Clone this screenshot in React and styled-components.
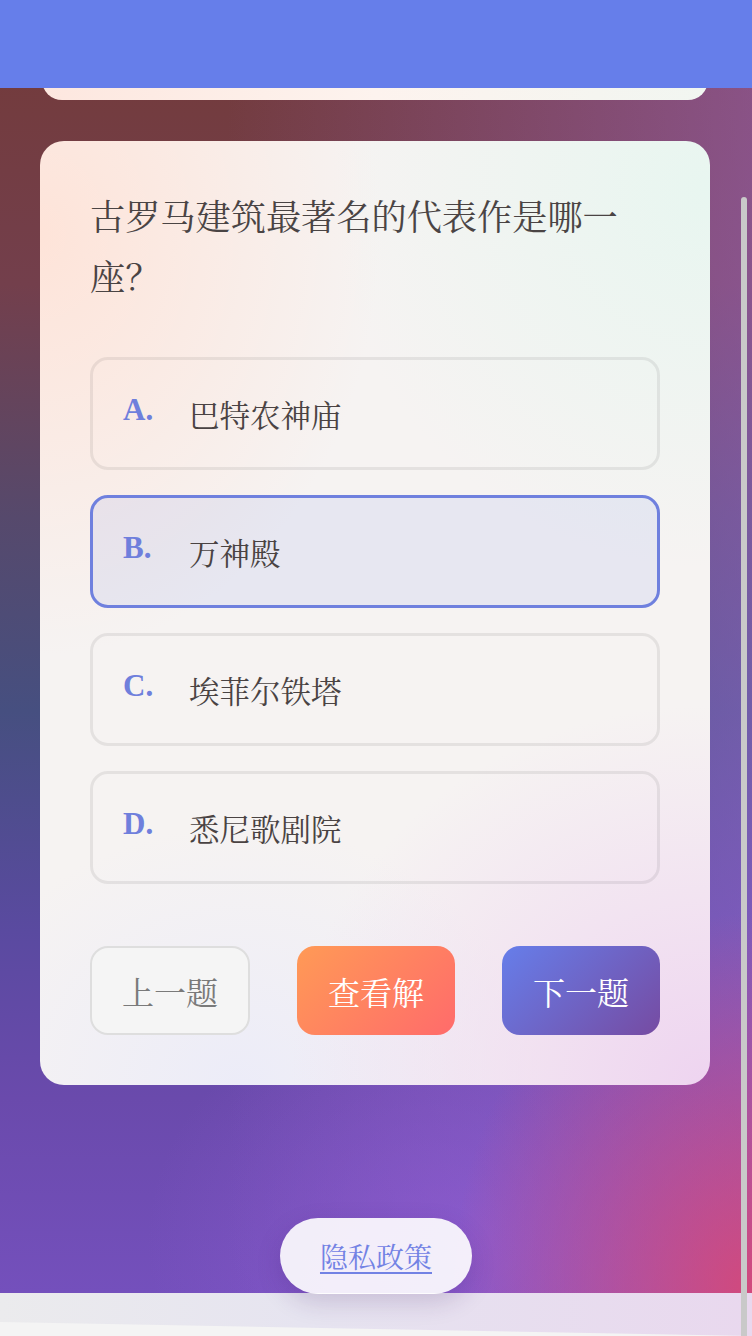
import React from 'react';
import styled, { createGlobalStyle } from 'styled-components';

const GlobalStyle = createGlobalStyle`
  html, body {
    margin: 0;
    padding: 0;
  }
  body {
    font-family: "Liberation Serif", "Noto Serif CJK SC", "Noto Sans CJK SC", serif;
    background: #f4f4f4;
  }
  * {
    box-sizing: border-box;
  }
`;

const Page = styled.div`
  width: 752px;
  min-height: 1336px;
  display: flex;
  flex-direction: column;
  overflow: hidden;
`;

const Stage = styled.div`
  display: flex;
  flex-direction: column;
  align-items: stretch;
  background:
    radial-gradient(ellipse 300px 380px at 100% 100%, rgba(214, 72, 120, 0.95) 0%, rgba(214, 72, 120, 0) 100%),
    radial-gradient(ellipse 320px 260px at 62% 96%, rgba(150, 95, 215, 0.55) 0%, rgba(150, 95, 215, 0) 100%),
    linear-gradient(90deg, rgba(165, 110, 220, 0) 30%, rgba(165, 110, 220, 0.45) 100%),
    linear-gradient(180deg, #733a38 0%, #733f4c 22%, #56496c 40%, #464f80 55%, #5a4aa0 72%, #6a4aac 85%, #7450bc 100%);
`;

const Header = styled.header`
  position: fixed;
  top: 0;
  left: 0;
  right: 0;
  height: 88px;
  background: #667eea;
  z-index: 10;
`;

const PrevCard = styled.div`
  height: 100px;
  margin: 0 44px 0 42px;
  border-radius: 0 0 20px 20px;
  background: linear-gradient(90deg, #fde7df 0%, #fdf3ee 50%, #f1f6f1 100%);
`;

const Card = styled.section`
  margin: 41px 42px 0 40px;
  padding: 48px 50px 50px;
  border-radius: 24px;
  background:
    radial-gradient(ellipse 340px 420px at 0% 10%, rgba(255, 226, 214, 0.9) 0%, rgba(255, 226, 214, 0) 100%),
    radial-gradient(ellipse 380px 380px at 100% 5%, rgba(232, 246, 240, 1) 0%, rgba(232, 246, 240, 0) 100%),
    radial-gradient(ellipse 420px 380px at 100% 100%, rgba(238, 212, 240, 1) 0%, rgba(238, 212, 240, 0) 100%),
    radial-gradient(ellipse 300px 260px at 30% 100%, rgba(236, 236, 248, 1) 0%, rgba(236, 236, 248, 0) 100%),
    #f6f3f2;
`;

const Question = styled.h2`
  margin: 0 0 48px;
  font-size: 35.2px;
  line-height: 60px;
  font-weight: 400;
  color: #4a4444;
`;

const OptionList = styled.div`
  display: flex;
  flex-direction: column;
  gap: 25px;
`;

const Option = styled.div`
  height: 113px;
  display: flex;
  align-items: center;
  padding: 0 30px;
  border-radius: 18px;
  border: 3px solid ${({ $selected }) => ($selected ? '#6f80de' : 'rgba(0, 0, 0, 0.07)')};
  background: ${({ $selected }) => ($selected ? 'rgba(102, 126, 234, 0.1)' : 'transparent')};
`;

const Letter = styled.span`
  width: 66px;
  font-size: 31px;
  font-weight: 700;
  color: #6f7fdc;
  margin-top: -8px;
`;

const OptionText = styled.span`
  font-size: 30.5px;
  color: #4a4343;
`;

const Actions = styled.div`
  margin-top: 62px;
  display: flex;
  justify-content: space-between;
`;

const Button = styled.button`
  height: 89px;
  width: ${({ $wide }) => ($wide ? '160px' : '158px')};
  border-radius: 18px;
  font-family: inherit;
  font-size: 32px;
  cursor: pointer;
  white-space: nowrap;
  overflow: hidden;
  border: ${({ $variant }) => ($variant === 'ghost' ? '2px solid #dedede' : 'none')};
  color: ${({ $variant }) => ($variant === 'ghost' ? '#7a7a7a' : '#fff')};
  background: ${({ $variant }) =>
    $variant === 'ghost'
      ? '#f5f5f5'
      : $variant === 'warm'
      ? 'linear-gradient(135deg, #ff9a56 0%, #ff6b6b 100%)'
      : 'linear-gradient(135deg, #667eea 0%, #764ba2 100%)'};
`;

const PolicyRow = styled.div`
  margin-top: 133px;
  display: flex;
  justify-content: center;
  position: relative;
  z-index: 2;
`;

const PolicyPill = styled.a`
  width: 192px;
  height: 76px;
  border-radius: 38px;
  display: flex;
  align-items: center;
  justify-content: center;
  background: rgba(255, 255, 255, 0.9);
  box-shadow: 0 8px 24px rgba(60, 30, 100, 0.18);
  font-size: 28px;
  color: #7282e4;
  text-decoration: underline;
  text-underline-offset: 4px;
  margin-bottom: -1px;
`;

const Footer = styled.footer`
  position: relative;
  height: 43px;
  background: linear-gradient(90deg, #ebebed 0%, #e6e4f0 40%, #e9d8ee 100%);

  &::after {
    content: '';
    position: absolute;
    inset: 0;
    background: #f4f4f4;
    clip-path: polygon(0 29px, 100% 43px, 100% 100%, 0 100%);
  }
`;

const ScrollThumb = styled.div`
  position: fixed;
  top: 197px;
  right: 5px;
  width: 6px;
  height: 1139px;
  border-radius: 3px 3px 0 0;
  background: #c9c9c9;
  z-index: 20;
`;

const options = [
  { key: 'A', text: '巴特农神庙' },
  { key: 'B', text: '万神殿' },
  { key: 'C', text: '埃菲尔铁塔' },
  { key: 'D', text: '悉尼歌剧院' },
];

const App = () => {
  const selected = 'B';

  return (
    <>
      <GlobalStyle />
      <Header />
      <Page>
        <Stage>
          <PrevCard />
          <Card>
            <Question>古罗马建筑最著名的代表作是哪一座？</Question>
            <OptionList>
              {options.map((opt) => (
                <Option key={opt.key} $selected={opt.key === selected}>
                  <Letter>{opt.key}.</Letter>
                  <OptionText>{opt.text}</OptionText>
                </Option>
              ))}
            </OptionList>
            <Actions>
              <Button type="button" $variant="ghost" $wide>
                上一题
              </Button>
              <Button type="button" $variant="warm">
                查看解
              </Button>
              <Button type="button" $variant="cool">
                下一题
              </Button>
            </Actions>
          </Card>
          <PolicyRow>
            <PolicyPill href="#">隐私政策</PolicyPill>
          </PolicyRow>
        </Stage>
        <Footer />
      </Page>
      <ScrollThumb />
    </>
  );
};

export default App;
